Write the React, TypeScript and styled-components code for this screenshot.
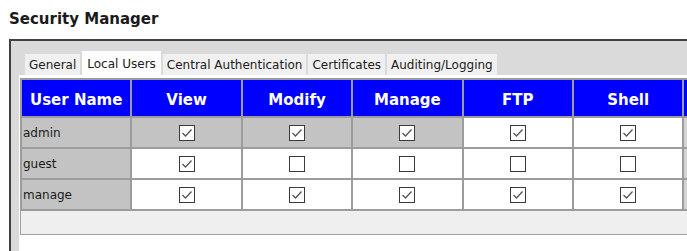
import React from "react";
import styled, { createGlobalStyle } from "styled-components";

const GlobalStyle = createGlobalStyle`
  html, body {
    margin: 0;
    padding: 0;
    background: #ffffff;
    overflow: hidden;
  }
  body {
    font-family: "DejaVu Sans", Verdana, sans-serif;
  }
`;

const Page = styled.div`
  box-sizing: border-box;
  width: 687px;
  height: 251px;
  overflow: hidden;
  padding: 10px 0 0 9px;
`;

const Title = styled.h1`
  margin: 0 0 11px 0;
  font-size: 15px;
  line-height: 18px;
  font-weight: bold;
  color: #1a1a1a;
`;

const Frame = styled.div`
  box-sizing: border-box;
  width: 760px;
  height: 212px;
  border-top: 2px solid #404040;
  border-left: 2px solid #404040;
  background: #dadada;
  padding: 10px 0 0 8px;
`;

const TabBar = styled.div`
  display: flex;
  align-items: flex-end;
  gap: 2px;
  padding-left: 6px;
  height: 24px;
  position: relative;
  z-index: 1;
`;

const Tab = styled.div<{ $active?: boolean }>`
  display: flex;
  align-items: center;
  height: ${(p) => (p.$active ? "25px" : "21px")};
  margin-bottom: ${(p) => (p.$active ? "-1px" : "0")};
  padding: 0 ${(p) => (p.$active ? "5px" : "4px")};
  background: ${(p) => (p.$active ? "#ffffff" : "#f0f0f0")};
  font-size: 12px;
  color: #202020;
  white-space: nowrap;
`;

const Panel = styled.div`
  background: #ffffff;
  padding: 3px 0 0 1px;
  height: 180px;
`;

const Grid = styled.div`
  display: grid;
  grid-template-columns: repeat(7, 108.4px);
  grid-template-rows: 36px repeat(3, 29px);
  gap: 2px;
  padding: 2px 0 2px 2px;
  background: #9c9c9c;
  width: max-content;
`;

const HeadCell = styled.div`
  background: #0000ff;
  color: #ffffff;
  font-weight: bold;
  font-size: 15px;
  display: flex;
  align-items: center;
  justify-content: center;
  padding-top: 4px;
`;

const NameCell = styled.div`
  background: #c3c3c3;
  color: #1a1a1a;
  font-size: 12px;
  display: flex;
  align-items: center;
  padding-left: 1px;
`;

const CheckCell = styled.div<{ $shade?: boolean }>`
  background: ${(p) => (p.$shade ? "#c3c3c3" : "#ffffff")};
  display: flex;
  align-items: center;
  justify-content: center;
`;

const EdgeCell = styled.div`
  background: #d4d4d4;
`;

const Box = styled.div`
  width: 16px;
  height: 16px;
  box-sizing: border-box;
  border: 1px solid #3a3a3a;
  background: #ffffff;
  display: flex;
  align-items: center;
  justify-content: center;
`;

const Footer = styled.div`
  height: 23px;
  width: 760px;
  background: #efefef;
  border-left: 1px solid #a0a0a0;
  border-bottom: 1px solid #a0a0a0;
`;

const Checkbox: React.FC<{ checked: boolean }> = ({ checked }) => (
  <Box>
    {checked && (
      <svg width="14" height="14" viewBox="0 0 14 14">
        <polyline
          points="2.5,7 5.5,10 11.5,3.5"
          fill="none"
          stroke="#555555"
          strokeWidth="1.3"
        />
      </svg>
    )}
  </Box>
);

const columns = ["User Name", "View", "Modify", "Manage", "FTP", "Shell"];
const tabs = ["General", "Local Users", "Central Authentication", "Certificates", "Auditing/Logging"];

const users = [
  { name: "admin", perms: [true, true, true, true, true], shade: [true, true, true, false, false] },
  { name: "guest", perms: [true, false, false, false, false], shade: [false, false, false, false, false] },
  { name: "manage", perms: [true, true, true, true, true], shade: [false, false, false, false, false] },
];

const App: React.FC = () => {
  return (
    <>
      <GlobalStyle />
      <Page>
        <Title>Security Manager</Title>
        <Frame>
          <TabBar>
            {tabs.map((t) => (
              <Tab key={t} $active={t === "Local Users"}>
                {t}
              </Tab>
            ))}
          </TabBar>
          <Panel>
            <Grid>
              {columns.map((c) => (
                <HeadCell key={c}>{c}</HeadCell>
              ))}
              <HeadCell />
              {users.map((u) => (
                <React.Fragment key={u.name}>
                  <NameCell>{u.name}</NameCell>
                  {u.perms.map((p, i) => (
                    <CheckCell key={i} $shade={u.shade[i]}>
                      <Checkbox checked={p} />
                    </CheckCell>
                  ))}
                  <EdgeCell />
                </React.Fragment>
              ))}
            </Grid>
            <Footer />
          </Panel>
        </Frame>
      </Page>
    </>
  );
};

export default App;
